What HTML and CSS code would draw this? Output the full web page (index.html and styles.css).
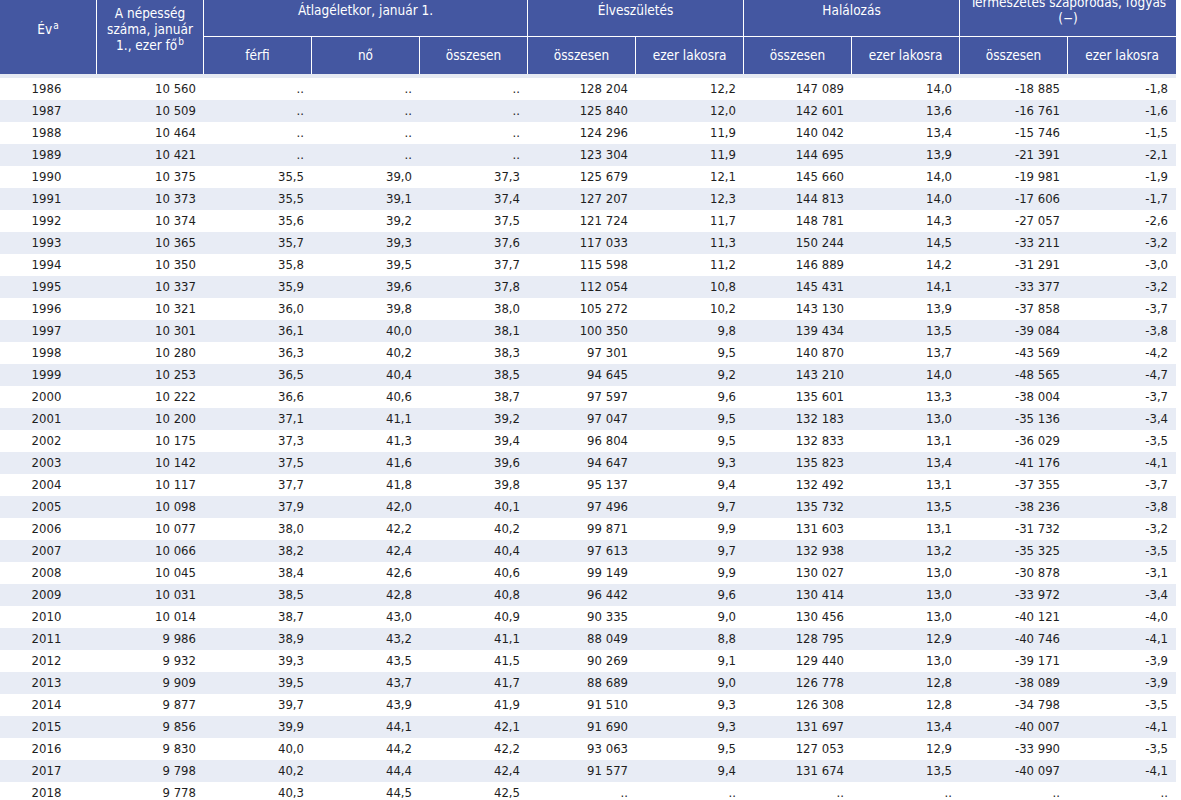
FILE: index.html
```html
<!DOCTYPE html>
<html lang="hu">
<head>
<meta charset="utf-8">
<title>Népesség</title>
<link rel="stylesheet" href="styles.css">
</head>
<body>
<div class="wrap">
<table class="data">
<colgroup>
<col class="c-ev"><col class="c-nep"><col class="c"><col class="c"><col class="c"><col class="c"><col class="c"><col class="c"><col class="c"><col class="c"><col class="c">
</colgroup>
<thead>
<tr>
<th rowspan="2" class="top">Év<sup>a</sup></th>
<th rowspan="2" class="top">A népesség száma, január 1., ezer fő<sup>b</sup></th>
<th colspan="3" class="top grp">Átlagéletkor, január 1.</th>
<th colspan="2" class="top grp">Élveszületés</th>
<th colspan="2" class="top grp">Halálozás</th>
<th colspan="2" class="top grp last">Természetes szaporodás, fogyás (−)</th>
</tr>
<tr>
<th class="sub">férfi</th>
<th class="sub">nő</th>
<th class="sub">összesen</th>
<th class="sub">összesen</th>
<th class="sub">ezer lakosra</th>
<th class="sub">összesen</th>
<th class="sub">ezer lakosra</th>
<th class="sub">összesen</th>
<th class="sub last">ezer lakosra</th>
</tr>
</thead>
<tbody>
<tr><td>1986</td><td>10 560</td><td>..</td><td>..</td><td>..</td><td>128 204</td><td>12,2</td><td>147 089</td><td>14,0</td><td>-18 885</td><td>-1,8</td></tr>
<tr><td>1987</td><td>10 509</td><td>..</td><td>..</td><td>..</td><td>125 840</td><td>12,0</td><td>142 601</td><td>13,6</td><td>-16 761</td><td>-1,6</td></tr>
<tr><td>1988</td><td>10 464</td><td>..</td><td>..</td><td>..</td><td>124 296</td><td>11,9</td><td>140 042</td><td>13,4</td><td>-15 746</td><td>-1,5</td></tr>
<tr><td>1989</td><td>10 421</td><td>..</td><td>..</td><td>..</td><td>123 304</td><td>11,9</td><td>144 695</td><td>13,9</td><td>-21 391</td><td>-2,1</td></tr>
<tr><td>1990</td><td>10 375</td><td>35,5</td><td>39,0</td><td>37,3</td><td>125 679</td><td>12,1</td><td>145 660</td><td>14,0</td><td>-19 981</td><td>-1,9</td></tr>
<tr><td>1991</td><td>10 373</td><td>35,5</td><td>39,1</td><td>37,4</td><td>127 207</td><td>12,3</td><td>144 813</td><td>14,0</td><td>-17 606</td><td>-1,7</td></tr>
<tr><td>1992</td><td>10 374</td><td>35,6</td><td>39,2</td><td>37,5</td><td>121 724</td><td>11,7</td><td>148 781</td><td>14,3</td><td>-27 057</td><td>-2,6</td></tr>
<tr><td>1993</td><td>10 365</td><td>35,7</td><td>39,3</td><td>37,6</td><td>117 033</td><td>11,3</td><td>150 244</td><td>14,5</td><td>-33 211</td><td>-3,2</td></tr>
<tr><td>1994</td><td>10 350</td><td>35,8</td><td>39,5</td><td>37,7</td><td>115 598</td><td>11,2</td><td>146 889</td><td>14,2</td><td>-31 291</td><td>-3,0</td></tr>
<tr><td>1995</td><td>10 337</td><td>35,9</td><td>39,6</td><td>37,8</td><td>112 054</td><td>10,8</td><td>145 431</td><td>14,1</td><td>-33 377</td><td>-3,2</td></tr>
<tr><td>1996</td><td>10 321</td><td>36,0</td><td>39,8</td><td>38,0</td><td>105 272</td><td>10,2</td><td>143 130</td><td>13,9</td><td>-37 858</td><td>-3,7</td></tr>
<tr><td>1997</td><td>10 301</td><td>36,1</td><td>40,0</td><td>38,1</td><td>100 350</td><td>9,8</td><td>139 434</td><td>13,5</td><td>-39 084</td><td>-3,8</td></tr>
<tr><td>1998</td><td>10 280</td><td>36,3</td><td>40,2</td><td>38,3</td><td>97 301</td><td>9,5</td><td>140 870</td><td>13,7</td><td>-43 569</td><td>-4,2</td></tr>
<tr><td>1999</td><td>10 253</td><td>36,5</td><td>40,4</td><td>38,5</td><td>94 645</td><td>9,2</td><td>143 210</td><td>14,0</td><td>-48 565</td><td>-4,7</td></tr>
<tr><td>2000</td><td>10 222</td><td>36,6</td><td>40,6</td><td>38,7</td><td>97 597</td><td>9,6</td><td>135 601</td><td>13,3</td><td>-38 004</td><td>-3,7</td></tr>
<tr><td>2001</td><td>10 200</td><td>37,1</td><td>41,1</td><td>39,2</td><td>97 047</td><td>9,5</td><td>132 183</td><td>13,0</td><td>-35 136</td><td>-3,4</td></tr>
<tr><td>2002</td><td>10 175</td><td>37,3</td><td>41,3</td><td>39,4</td><td>96 804</td><td>9,5</td><td>132 833</td><td>13,1</td><td>-36 029</td><td>-3,5</td></tr>
<tr><td>2003</td><td>10 142</td><td>37,5</td><td>41,6</td><td>39,6</td><td>94 647</td><td>9,3</td><td>135 823</td><td>13,4</td><td>-41 176</td><td>-4,1</td></tr>
<tr><td>2004</td><td>10 117</td><td>37,7</td><td>41,8</td><td>39,8</td><td>95 137</td><td>9,4</td><td>132 492</td><td>13,1</td><td>-37 355</td><td>-3,7</td></tr>
<tr><td>2005</td><td>10 098</td><td>37,9</td><td>42,0</td><td>40,1</td><td>97 496</td><td>9,7</td><td>135 732</td><td>13,5</td><td>-38 236</td><td>-3,8</td></tr>
<tr><td>2006</td><td>10 077</td><td>38,0</td><td>42,2</td><td>40,2</td><td>99 871</td><td>9,9</td><td>131 603</td><td>13,1</td><td>-31 732</td><td>-3,2</td></tr>
<tr><td>2007</td><td>10 066</td><td>38,2</td><td>42,4</td><td>40,4</td><td>97 613</td><td>9,7</td><td>132 938</td><td>13,2</td><td>-35 325</td><td>-3,5</td></tr>
<tr><td>2008</td><td>10 045</td><td>38,4</td><td>42,6</td><td>40,6</td><td>99 149</td><td>9,9</td><td>130 027</td><td>13,0</td><td>-30 878</td><td>-3,1</td></tr>
<tr><td>2009</td><td>10 031</td><td>38,5</td><td>42,8</td><td>40,8</td><td>96 442</td><td>9,6</td><td>130 414</td><td>13,0</td><td>-33 972</td><td>-3,4</td></tr>
<tr><td>2010</td><td>10 014</td><td>38,7</td><td>43,0</td><td>40,9</td><td>90 335</td><td>9,0</td><td>130 456</td><td>13,0</td><td>-40 121</td><td>-4,0</td></tr>
<tr><td>2011</td><td>9 986</td><td>38,9</td><td>43,2</td><td>41,1</td><td>88 049</td><td>8,8</td><td>128 795</td><td>12,9</td><td>-40 746</td><td>-4,1</td></tr>
<tr><td>2012</td><td>9 932</td><td>39,3</td><td>43,5</td><td>41,5</td><td>90 269</td><td>9,1</td><td>129 440</td><td>13,0</td><td>-39 171</td><td>-3,9</td></tr>
<tr><td>2013</td><td>9 909</td><td>39,5</td><td>43,7</td><td>41,7</td><td>88 689</td><td>9,0</td><td>126 778</td><td>12,8</td><td>-38 089</td><td>-3,9</td></tr>
<tr><td>2014</td><td>9 877</td><td>39,7</td><td>43,9</td><td>41,9</td><td>91 510</td><td>9,3</td><td>126 308</td><td>12,8</td><td>-34 798</td><td>-3,5</td></tr>
<tr><td>2015</td><td>9 856</td><td>39,9</td><td>44,1</td><td>42,1</td><td>91 690</td><td>9,3</td><td>131 697</td><td>13,4</td><td>-40 007</td><td>-4,1</td></tr>
<tr><td>2016</td><td>9 830</td><td>40,0</td><td>44,2</td><td>42,2</td><td>93 063</td><td>9,5</td><td>127 053</td><td>12,9</td><td>-33 990</td><td>-3,5</td></tr>
<tr><td>2017</td><td>9 798</td><td>40,2</td><td>44,4</td><td>42,4</td><td>91 577</td><td>9,4</td><td>131 674</td><td>13,5</td><td>-40 097</td><td>-4,1</td></tr>
<tr><td>2018</td><td>9 778</td><td>40,3</td><td>44,5</td><td>42,5</td><td>..</td><td>..</td><td>..</td><td>..</td><td>..</td><td>..</td></tr>
</tbody>
</table>
</div>
</body>
</html>
```
FILE: styles.css
```css
html, body {
  margin: 0;
  padding: 0;
  background: #ffffff;
}

body {
  font-family: "DejaVu Sans Condensed", "DejaVu Sans", "Liberation Sans", sans-serif;
  font-stretch: condensed;
  font-size: 13px;
  color: #1e1e1e;
  overflow: hidden;
}

.wrap {
  width: 1179px;
  margin-top: -16px;
}

.data {
  width: 1176px;
  table-layout: fixed;
  border-collapse: separate;
  border-spacing: 0;
}

.c-ev { width: 97px; }
.c-nep { width: 107px; }
.c { width: 108px; }

.data th {
  background: #4457a1;
  color: #ffffff;
  font-weight: normal;
  font-size: 13.5px;
  line-height: 16px;
  text-align: center;
  vertical-align: middle;
  border-right: 1px solid #ffffff;
  padding: 10px 4px;
}

.data th.last {
  border-right: 0;
}

.data th.grp {
  border-bottom: 1px solid #ffffff;
}

.data th.sub {
  padding: 10px 4px 11px;
}

.data sup {
  font-size: 10px;
  line-height: 0;
  vertical-align: 5px;
  margin-left: 1px;
}

.data td {
  height: 16px;
  line-height: 16px;
  padding: 3px 8px;
  text-align: right;
  white-space: nowrap;
}

.data td:first-child {
  text-align: center;
  padding-right: 12px;
}

.data tbody tr:nth-child(even) td {
  background: #e8ecf5;
}

.data tbody tr:first-child td {
  border-top: 4px solid #e6eaf3;
}
```
